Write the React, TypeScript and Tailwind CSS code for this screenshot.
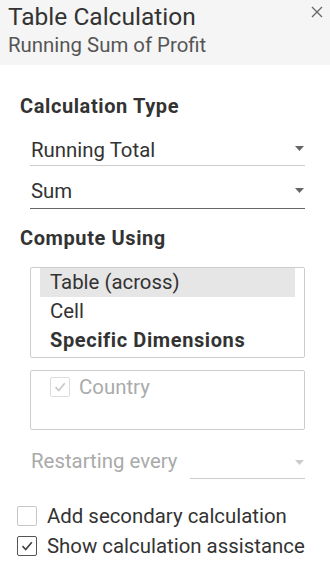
import React from 'react'

function Caret({ color = '#666' }: { color?: string }) {
  return (
    <svg width="9" height="5" viewBox="0 0 9 5">
      <path d="M0 0h9L4.5 5z" fill={color} />
    </svg>
  )
}

function CheckMark({ color }: { color: string }) {
  return (
    <svg width="12" height="10" viewBox="0 0 12 10">
      <path d="M1.5 5.2l3.2 3.3L10.8 1.2" fill="none" stroke={color} strokeWidth="1.7" />
    </svg>
  )
}

export default function App() {
  const computeOptions = ['Table (across)', 'Cell', 'Specific Dimensions']

  return (
    <div
      className="w-[330px] h-[588px] bg-white text-[#333] text-[20.4px] overflow-hidden"
      style={{ fontFamily: 'Roboto, "Liberation Sans", sans-serif' }}
    >
      {/* Header */}
      <div className="flex justify-between bg-[#f5f5f5] pl-2 pr-[7px] pt-[3px] pb-[8px]">
        <div>
          <div className="text-[24.5px] leading-[28px] text-[#333]">Table Calculation</div>
          <div className="mt-[2px] text-[20.4px] leading-[24px] text-[#555]">Running Sum of Profit</div>
        </div>
        <button className="mt-[3px] h-[12px] w-[12px]">
          <svg width="12" height="12" viewBox="0 0 12 12">
            <path d="M1 1l10 10M11 1L1 11" stroke="#666" strokeWidth="1.3" />
          </svg>
        </button>
      </div>

      {/* Body */}
      <div className="pl-5 pt-[29px]">
        <div className="text-[20px] font-bold leading-[24px] tracking-[0.6px]">Calculation Type</div>

        <div className="mt-[20px] ml-[10px] w-[275px] flex items-start justify-between border-b border-[#ccc] pb-[3px] pl-px">
          <span className="leading-[24px]">Running Total</span>
          <span className="mt-[8px] mr-px"><Caret /></span>
        </div>
        <div className="mt-[13px] ml-[10px] w-[275px] flex items-start justify-between border-b border-[#666] pb-[5px] pl-px">
          <span className="leading-[24px]">Sum</span>
          <span className="mt-[9px] mr-px"><Caret /></span>
        </div>

        <div className="mt-[17px] text-[20px] font-bold leading-[24px] tracking-[0.6px]">Compute Using</div>

        <div className="mt-[17px] ml-[10px] w-[275px] rounded-[2px] border border-[#ccc] px-[9px] pb-[2px]">
          {computeOptions.map((opt, i) => (
            <div
              key={opt}
              className={`h-[29px] leading-[29px] pl-[10px] ${i === 0 ? 'bg-[#e6e6e6]' : ''} ${i === 2 ? 'text-[20px] font-bold tracking-[0.6px]' : ''}`}
            >
              {opt}
            </div>
          ))}
        </div>

        <div className="mt-[12px] ml-[10px] w-[275px] h-[60px] rounded-[2px] border border-[#ccc] pt-[4px] pl-[19px]">
          <div className="flex items-center">
            <div className="flex h-[20px] w-[20px] items-center justify-center rounded-[2px] border border-[#ddd]">
              <CheckMark color="#c8c8c8" />
            </div>
            <span className="ml-[9px] leading-[24px] text-[#aaa]">Country</span>
          </div>
        </div>

        <div className="mt-[19px] ml-[10px] w-[275px] flex pl-px">
          <span className="leading-[24px] text-[#aaa]">Restarting every</span>
          <div className="ml-auto flex h-[30px] w-[115px] items-start justify-end border-b border-[#ccc] pr-px">
            <span className="mt-[11px]"><Caret color="#ccc" /></span>
          </div>
        </div>

        <div className="mt-[22px] -ml-[3px]">
          <div className="flex h-[30px] items-center">
            <div className="h-[20px] w-[20px] rounded-[2px] border border-[#c6c6c6]" />
            <span className="ml-[10px] leading-[24px]">Add secondary calculation</span>
          </div>
          <div className="flex h-[30px] items-center">
            <div className="flex h-[20px] w-[20px] items-center justify-center rounded-[2px] border border-[#555]">
              <CheckMark color="#444" />
            </div>
            <span className="ml-[10px] leading-[24px]">Show calculation assistance</span>
          </div>
        </div>
      </div>
    </div>
  )
}
